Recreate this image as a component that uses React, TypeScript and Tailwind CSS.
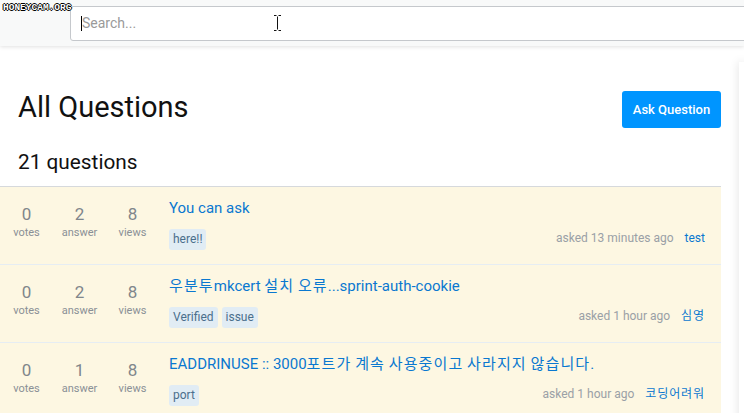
import React from 'react';

type Question = {
  votes: number;
  answers: number;
  views: number;
  title: string;
  tags: string[];
  asked: string;
  user: string;
};

const questions: Question[] = [
  { votes: 0, answers: 2, views: 8, title: 'You can ask', tags: ['here!!'], asked: 'asked 13 minutes ago', user: 'test' },
  { votes: 0, answers: 2, views: 8, title: '우분투mkcert 설치 오류...sprint-auth-cookie', tags: ['Verified', 'issue'], asked: 'asked 1 hour ago', user: '심영' },
  { votes: 0, answers: 1, views: 8, title: 'EADDRINUSE :: 3000포트가 계속 사용중이고 사라지지 않습니다.', tags: ['port'], asked: 'asked 1 hour ago', user: '코딩어려워' },
];

// hangul in the shot is a bit wider than Noto CJK, so space those runs out
function Text({ children }: { children: string }) {
  const parts = children.split(/([\uac00-\ud7a3]+)/);
  return (
    <>
      {parts.map((p, i) =>
        /[\uac00-\ud7a3]/.test(p) ? (
          <span key={i} className="tracking-[0.075em]">{p}</span>
        ) : (
          <React.Fragment key={i}>{p}</React.Fragment>
        )
      )}
    </>
  );
}

function Stat({ value, label }: { value: number; label: string }) {
  return (
    <div className="w-[53px] text-center">
      <div className="text-[17px] leading-[20px] text-[#80868b]">{value}</div>
      <div className="mt-[2px] text-[11px] leading-[14px] text-[#8a9096]">{label}</div>
    </div>
  );
}

function QuestionRow({ q }: { q: Question }) {
  return (
    <div className="flex h-[78px] border-b border-[#e6edf3] bg-[#fdf7e2]">
      <div className="flex pt-[17px]">
        <Stat value={q.votes} label="votes" />
        <Stat value={q.answers} label="answer" />
        <Stat value={q.views} label="views" />
      </div>
      <div className="ml-[10px] flex-1 pt-[11px] pr-[16px]">
        <div className="text-[15px] leading-[20px] text-[#0a78d0]">
          <Text>{q.title}</Text>
        </div>
        <div className="mt-[11px] flex items-center justify-between">
          <div className="flex gap-[4px]">
            {q.tags.map((t) => (
              <span key={t} className="h-[21px] rounded-[3px] bg-[#e1ecf4] px-[4px] text-[12px] leading-[21px] text-[#4b6f8c]">
                {t}
              </span>
            ))}
          </div>
          <div className="mb-[4px] flex text-[12px] leading-[16px]">
            <span className="text-[#9aa0a6]">{q.asked}</span>
            <span className="ml-[11px] text-[#0a78d0]">
              <Text>{q.user}</Text>
            </span>
          </div>
        </div>
      </div>
    </div>
  );
}

export default function App() {
  return (
    <div className="relative h-[413px] w-full overflow-hidden bg-white font-['Roboto','Noto_Sans_CJK_KR',sans-serif]">
      <header className="relative z-10 flex h-[46px] items-center bg-[#f8f9f9] pl-[70px] shadow-[0_1px_4px_rgba(0,0,0,0.12)]">
        <div className="-mr-[20px] flex h-[35px] flex-1 items-center rounded-l-[3px] border border-[#c5c8cc] bg-white pl-[10px]">
          <span className="h-[15px] w-px bg-black" />
          <span className="text-[14px] text-[#9a9a9a]">Search...</span>
        </div>
        <span className="absolute left-[3px] top-[2px] font-['Liberation_Mono',monospace] text-[9.5px] font-bold leading-[11px] text-white [text-shadow:1px_0_0_#000,-1px_0_0_#000,0_1px_0_#000,0_-1px_0_#000]">
          HONEYCAM.ORG
        </span>
        <svg className="absolute left-[273px] top-[15px]" width="9" height="16" viewBox="0 0 9 16">
          <path d="M1 0.5h2.5M5.5 0.5H8M4.5 1.5v13M1 15.5h2.5M5.5 15.5H8" stroke="#111" strokeWidth="1" fill="none" />
        </svg>
      </header>

      <div className="flex">
        <main className="w-[721px] shrink-0">
          <div className="flex items-start justify-between pl-[18px] pt-[44px]">
            <h1 className="text-[29px] leading-[34px] text-[#111]">All Questions</h1>
            <button className="mt-[1px] h-[37px] w-[99px] rounded-[3px] bg-[#0095ff] text-[13px] font-medium text-white">
              Ask Question
            </button>
          </div>
          <div className="mt-[22px] pl-[18px] text-[20.8px] leading-[24px] text-[#111]">21 questions</div>
          <div className="mt-[12px] border-t border-[#d6d9dc]">
            {questions.map((q, i) => (
              <QuestionRow key={i} q={q} />
            ))}
          </div>
        </main>
        <aside className="ml-[18px] mt-[16px] h-[400px] flex-1 bg-white shadow-[0_0_10px_rgba(0,0,0,0.15)]" />
      </div>
    </div>
  );
}
